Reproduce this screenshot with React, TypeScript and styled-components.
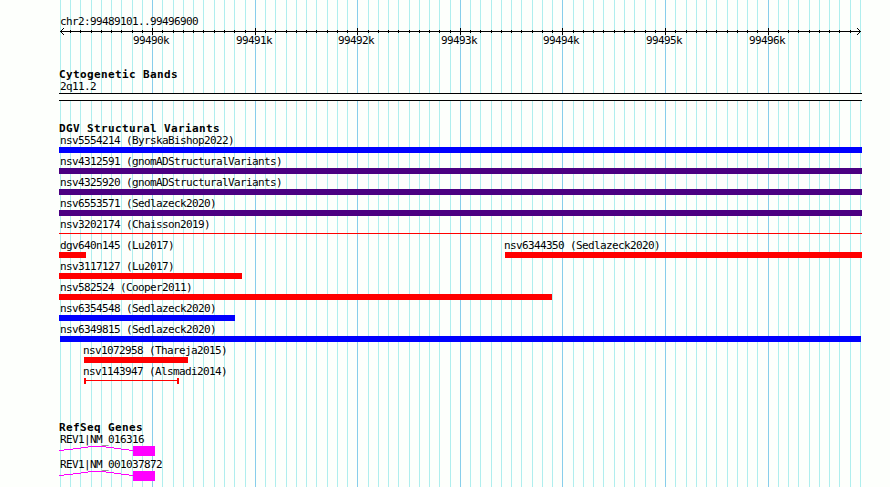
import React from "react";
import styled, { createGlobalStyle } from "styled-components";

const Global = createGlobalStyle`
  html, body { margin: 0; padding: 0; background: #fdfffc; }
  body { overflow: hidden; }
`;

const Viewer = styled.main`
  position: relative;
  width: 890px;
  height: 487px;
  overflow: hidden;
  color: #000;
  font-family: "DejaVu Sans Mono", "Liberation Mono", monospace;
`;

const GridLines = styled.svg`
  position: absolute;
  inset: 0;
`;

const Panel = styled.div`
  position: relative;
  display: flex;
  flex-direction: column;
  width: 803px;
  margin-left: 59px;
`;

const Track = styled.section<{ $gap: number }>`
  display: flex;
  flex-direction: column;
  padding-top: ${(p) => p.$gap}px;
`;

const Heading = styled.h2`
  margin: 0;
  height: 12px;
  font-size: 11px;
  line-height: 14px;
  font-weight: 700;
  letter-spacing: 0.378px;
  white-space: pre;
`;

const Label = styled.div<{ $x?: number; $h?: number }>`
  height: ${(p) => p.$h ?? 12}px;
  padding-left: ${(p) => p.$x ?? 1}px;
  font-size: 11px;
  line-height: 14px;
  letter-spacing: -0.622px;
  white-space: pre;
`;

const Ruler = styled.svg`
  display: block;
`;

const Scale = styled.div`
  display: grid;
  grid-template-columns: 74px repeat(6, 103px) 1fr;
  height: 11px;
  font-size: 11px;
  line-height: 12px;
  letter-spacing: -0.622px;
`;

const ScaleLabel = styled.span<{ $nudge: number }>`
  margin-left: ${(p) => p.$nudge}px;
`;

const Band = styled.div`
  box-sizing: border-box;
  height: 8px;
  border: solid #000;
  border-width: 1px 0;
  background: #fdfffc;
`;

const Row = styled.div`
  display: flex;
  height: 21px;
`;

const Feature = styled.div<{ $offset: number }>`
  flex: none;
  width: 0;
  margin-left: ${(p) => p.$offset}px;
`;

const FeatureName = styled(Label)<{ $shift: number }>`
  padding-left: 0;
  margin-left: ${(p) => p.$shift}px;
`;

const Bar = styled.div<{ $color: string; $width: number; $thin?: boolean }>`
  width: ${(p) => p.$width}px;
  height: ${(p) => (p.$thin ? 1 : 6)}px;
  margin-top: ${(p) => (p.$thin ? 2 : 0)}px;
  background: ${(p) => p.$color};
`;

const Span = styled.div<{ $color: string; $width: number }>`
  box-sizing: border-box;
  display: flex;
  align-items: center;
  width: ${(p) => p.$width}px;
  height: 6px;
  border: solid ${(p) => p.$color};
  border-width: 0 2px;
  &::before {
    content: "";
    flex: 1;
    height: 1px;
    margin-bottom: 1px;
    background: ${(p) => p.$color};
  }
`;

const Gene = styled.svg`
  display: block;
`;

const gridX = (i: number) => Math.round(59.9 + i * 10.2564);
const grid = Array.from({ length: 79 }, (_, i) => ({ x: gridX(i), major: i % 10 === 9 }));

const BLUE = "#0000ff";
const INDIGO = "#4b0082";
const RED = "#ff0000";

type Variant = {
  name: string;
  start: number;
  end: number;
  color: string;
  kind?: "thin" | "span";
  labelPad?: number;
};

const variants: Variant[][] = [
  [{ name: "nsv5554214 (ByrskaBishop2022)", start: 0, end: 803, color: BLUE }],
  [{ name: "nsv4312591 (gnomADStructuralVariants)", start: 0, end: 803, color: INDIGO }],
  [{ name: "nsv4325920 (gnomADStructuralVariants)", start: 0, end: 803, color: INDIGO }],
  [{ name: "nsv6553571 (Sedlazeck2020)", start: 0, end: 803, color: INDIGO }],
  [{ name: "nsv3202174 (Chaisson2019)", start: 0, end: 803, color: RED, kind: "thin" }],
  [
    { name: "dgv640n145 (Lu2017)", start: 0, end: 27, color: RED },
    { name: "nsv6344350 (Sedlazeck2020)", start: 446, end: 803, color: RED, labelPad: -1 },
  ],
  [{ name: "nsv3117127 (Lu2017)", start: 0, end: 183, color: RED }],
  [{ name: "nsv582524 (Cooper2011)", start: 0, end: 493, color: RED }],
  [{ name: "nsv6354548 (Sedlazeck2020)", start: 0, end: 176, color: BLUE }],
  [{ name: "nsv6349815 (Sedlazeck2020)", start: 1, end: 802, color: BLUE, labelPad: 0 }],
  [{ name: "nsv1072958 (Thareja2015)", start: 25, end: 129, color: RED, labelPad: -1 }],
  [{ name: "nsv1143947 (Alsmadi2014)", start: 25, end: 120, color: RED, kind: "span", labelPad: -1 }],
];

function GeneModel() {
  return (
    <Gene width="96" height="10" shapeRendering="crispEdges">
      <polyline points="0,4.5 12,3.2 24,1.8 33,0.5 43,0.5 53,1.8 64,3.2 74,4.5" fill="none" stroke="#ff00ff" />
      <rect x="74" y="0" width="22" height="10" fill="#ff00ff" />
    </Gene>
  );
}

export default function App() {
  return (
    <Viewer>
      <Global />
      <GridLines width="890" height="487" shapeRendering="crispEdges">
        {grid.map((g) => (
          <rect key={g.x} x={g.x} y="0" width="1" height="487" fill={g.major ? "#87ceeb" : "#afeeee"} />
        ))}
      </GridLines>
      <Panel>
        <Track $gap={15}>
          <Label>chr2:99489101..99496900</Label>
          <Ruler width="803" height="8" viewBox="59 27 803 8" shapeRendering="crispEdges">
            <rect x="60" y="31" width="801" height="1" />
            {grid.slice(1, -1).map((g) => (
              <rect key={g.x} x={g.x} y={g.major ? 28 : 30} width="1" height={g.major ? 7 : 3} />
            ))}
            <path d="M61 30h1v1h-1zM62 29h1v1h-1zM63 28h1v1h-1zM61 32h1v1h-1zM62 33h1v1h-1zM63 34h1v1h-1zM859 30h1v1h-1zM858 29h1v1h-1zM857 28h1v1h-1zM859 32h1v1h-1zM858 33h1v1h-1zM857 34h1v1h-1z" />
          </Ruler>
          <Scale>
            {[9, 19, 29, 39, 49, 59, 69].map((i, n) => (
              <ScaleLabel key={i} $nudge={gridX(i) - 19 - 59 - (n ? 74 + (n - 1) * 103 : 0)}>
                {99490 + n}k
              </ScaleLabel>
            ))}
          </Scale>
        </Track>
        <Track $gap={22}>
          <Heading>Cytogenetic Bands</Heading>
          <Label $h={13}>2q11.2</Label>
          <Band />
        </Track>
        <Track $gap={21}>
          <Heading>DGV Structural Variants</Heading>
          {variants.map((row, r) => (
            <Row key={r}>
              {row.map((v, i) => (
                <Feature key={v.name} $offset={v.start - (i ? row[i - 1].start : 0)}>
                  <FeatureName $h={13} $shift={v.labelPad ?? 1}>{v.name}</FeatureName>
                  {v.kind === "span" ? (
                    <Span $color={v.color} $width={v.end - v.start} />
                  ) : (
                    <Bar $color={v.color} $width={v.end - v.start} $thin={v.kind === "thin"} />
                  )}
                </Feature>
              ))}
            </Row>
          ))}
        </Track>
        <Track $gap={35}>
          <Heading>RefSeq Genes</Heading>
          <Label $h={13}>REV1|NM_016316</Label>
          <GeneModel />
        </Track>
        <Track $gap={2}>
          <Label $h={13}>REV1|NM_001037872</Label>
          <GeneModel />
        </Track>
      </Panel>
    </Viewer>
  );
}
